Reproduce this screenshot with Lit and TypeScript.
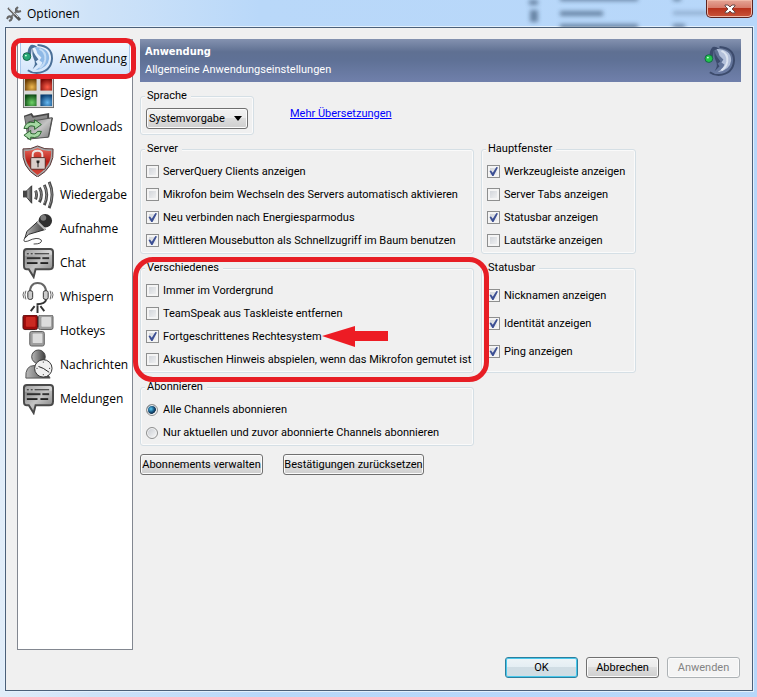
import { LitElement, html, css, svg, nothing } from "lit";
import { customElement, property } from "lit/decorators.js";

const speech = svg`
  <path d="M5 2h24q3 0 3 3v14q0 4-4 4H14l-2 8-5-8H5q-3 0-3-4V5q0-3 3-3z" fill="url(#g)" stroke="#4a4a4a" stroke-width="2"/>
  <path d="M3 9V6q0-3 3-3h22q3 0 3 3v2z" fill="#fff" opacity=".3"/>
  <path d="M5 7h2M9 7h2M13 7h15M5 12h14M21 12h7M5 17h11M19 17h8" stroke="#1c1c1c" stroke-width="1"/>
  <path d="M5 11h14M21 11h7M5 16h11M19 16h8" stroke="#333" stroke-width="1"/>`;

const moon = (line: string, face: string, shine: string, mic: string) => svg`
  <path d="M16 2Q31 3 31 16Q30 30 15 31Q10 31 6 28" fill="none" stroke="${line}" stroke-width="2"/>
  <path d="M9 2Q5 6 6 12L9 14L10 6Q12 4 16 4Q12 1 9 2z" fill="${line}"/>
  <path d="M13 4Q28 4 28 16Q27 26 14 28Q20 24 21 20L18 18L20 15L16 11Q15 7 13 4z" fill="${face}"/>
  <path d="M18 6Q25 9 24 17Q23 23 18 26" fill="none" stroke="${shine}" stroke-width="2"/>
  <path d="M11 5Q11 9 14 13L17 17L14 19L16 22L11 27Q15 21 12 16Q10 12 11 5z" fill="${line}"/>
  <circle cx="5" cy="14" r="4" fill="${mic}" stroke="#17624a"/>
  <circle cx="4" cy="13" r="1" fill="#c9ffd9"/>`;

const icons: Record<string, unknown> = {
  app: moon("#4b7098", "#8fb9e6", "#c4dcf5", "#27a876"),
  banner: moon("#3c4b6c", "#b3c0da", "#dbe3f0", "#21c64a"),
  design: svg`
    <rect x="1" y="0" width="32" height="32" fill="#6c6c6c"/>
    <rect x="2" y="1" width="30" height="30" fill="#d8d8d8"/>
    <rect x="3" y="2" width="12" height="12" fill="url(#q1)"/><rect x="19" y="2" width="12" height="12" fill="url(#q2)"/>
    <rect x="3" y="18" width="12" height="12" fill="url(#q3)"/><rect x="19" y="18" width="12" height="12" fill="url(#q4)"/>`,
  downloads: svg`
    <path d="M2 5l8-3 2 3 16-3v5l4 0-4 20-22 2z" fill="#484848"/>
    <path d="M3 6l6-2 2 3 15-3v22L6 27z" fill="#8a8a8a"/>
    <path d="M7 11l24-4-4 20-21 2z" fill="url(#g)" stroke="#555"/>
    <path d="M2 18Q4 10 13 12L13 9L20 14L13 19V16Q7 14 6 18z" fill="#a5d8a3" stroke="#28632c"/>
    <path d="M20 21Q18 29 9 27V30L2 25L9 20V23Q14 25 16 21z" fill="#a5d8a3" stroke="#28632c"/>`,
  security: svg`
    <path d="M16 1Q23 5 32 4Q34 23 16 33Q-1 23 1 4Q9 5 16 1z" fill="#a8a8a8" stroke="#553030"/>
    <path d="M16 3Q23 7 30 6Q31 21 16 31Q2 21 3 6Q9 7 16 3z" fill="url(#r)"/>
    <path d="M11 15V10Q11 6 16 6Q21 6 21 10V15" fill="none" stroke="#ece2e0" stroke-width="2"/>
    <rect x="9" y="13" width="15" height="12" rx="1" fill="#d9cecb" stroke="#5a2a26"/>
    <path d="M15 16h3v2l-1 1v4h-1v-4l-1-1z" fill="#222"/>`,
  playback: svg`
    <path d="M1 12h4v7H1z" fill="#444"/><path d="M5 12l5-5v18l-5-6z" fill="url(#k)" stroke="#333"/>
    <path d="M14 12q2 4 0 9M18 9q4 7 0 15M23 6q5 10 0 21M28 3q6 13 0 27" fill="none" stroke="#484848" stroke-width="3"/>
    <path d="M14 12q2 4 0 8M18 10q4 6 0 12M23 7q5 9 0 18M28 4q6 12 0 24" fill="none" stroke="#8a8a8a" stroke-width="1"/>`,
  capture: svg`
    <path d="M16 9l8 8L7 22l-4 4 2-7z" fill="url(#k)" stroke="#2a2a2a"/>
    <circle cx="24" cy="8" r="7" fill="#303030"/><circle cx="22" cy="5" r="3" fill="#7a7a7a"/>
    <path d="M16 9l8 8" stroke="#bbb" stroke-width="2"/>
    <path d="M4 24Q-1 31 6 29Q16 24 20 28Q21 32 12 32" fill="none" stroke="#444"/>`,
  chat: speech,
  whisper: svg`
    <path d="M8 13Q8 2 16 2Q25 2 25 13" fill="none" stroke="#666" stroke-width="2"/>
    <rect x="6" y="10" width="5" height="9" rx="2" fill="#ccc" stroke="#333"/><rect x="22" y="10" width="5" height="9" rx="2" fill="#ccc" stroke="#333"/>
    <path d="M25 19Q24 24 15 24" fill="none" stroke="#333" stroke-width="2"/>
    <path d="M4 10q-2 4 0 9M2 11q-2 3 0 7M29 10q2 4 0 9M31 11q2 3 0 7" fill="none" stroke="#666"/>
    <path d="M16 25v8M13 26l-4 5M19 26l4 5" stroke="#333" stroke-width="2"/>`,
  hotkeys: svg`
    <rect x="1" y="0" width="15" height="15" rx="2" fill="#9e0c0c" stroke="#4c1515"/><rect x="4" y="2" width="10" height="10" rx="1" fill="#cb2a22"/>
    <rect x="17" y="0" width="15" height="15" rx="2" fill="#9f9f9f" stroke="#5f5f5f"/><rect x="20" y="2" width="10" height="10" rx="1" fill="#dcdcdc"/>
    <rect x="8" y="17" width="15" height="15" rx="2" fill="#9f9f9f" stroke="#5f5f5f"/><rect x="11" y="19" width="10" height="10" rx="1" fill="#dcdcdc"/>`,
  messages: svg`
    <path d="M4 30Q3 17 13 17Q22 17 29 30z" fill="url(#k)" stroke="#555"/>
    <circle cx="17" cy="8" r="7" fill="url(#k)" stroke="#444"/>
    <circle cx="22" cy="20" r="9" fill="#f0f0f0" stroke="#333"/>
    <path d="M22 20l6 4M22 20l-5-2M22 13v1M22 26v1M15 20h1M28 20h1" stroke="#222" stroke-width="1"/>`,
  notify: speech,
};

@customElement("ts-icon")
export class TsIcon extends LitElement {
  @property() name = "";
  static styles = css`
    :host { display: block; flex: none; width: 32px; height: 32px; }
    .art { display: block; width: 100%; height: 100%; }
  `;
  render() {
    const tile = (id: string, light: string, dark: string) => svg`
      <radialGradient id=${id} cx=".6" cy=".7" r=".7"><stop stop-color=${light}/><stop offset="1" stop-color=${dark}/></radialGradient>`;
    return html`<svg class="art" viewBox="0 0 33 33" aria-hidden="true">
      <defs>
        <linearGradient id="g" x2="1" y2="1"><stop stop-color="#777"/><stop offset=".5" stop-color="#c4c4c4"/><stop offset="1" stop-color="#777"/></linearGradient>
        <linearGradient id="k"><stop stop-color="#bbb"/><stop offset="1" stop-color="#3c3c3c"/></linearGradient>
        <linearGradient id="r" x2="0" y2="1"><stop stop-color="#e8695c"/><stop offset=".5" stop-color="#b81e16"/><stop offset="1" stop-color="#d5493c"/></linearGradient>
        ${tile("q1", "#f0b94e", "#6b3f06")}${tile("q2", "#ff5e4a", "#7e0c08")}${tile("q3", "#6fd468", "#0d4a14")}${tile("q4", "#66b9f2", "#0b3d70")}
      </defs>${icons[this.name]}</svg>`;
  }
}

interface Option { text: string; on?: boolean; marked?: boolean }

const pages = [
  ["app", "Anwendung"], ["design", "Design"], ["downloads", "Downloads"],
  ["security", "Sicherheit"], ["playback", "Wiedergabe"], ["capture", "Aufnahme"],
  ["chat", "Chat"], ["whisper", "Whispern"], ["hotkeys", "Hotkeys"],
  ["messages", "Nachrichten"], ["notify", "Meldungen"],
];

const server: Option[] = [
  { text: "ServerQuery Clients anzeigen" },
  { text: "Mikrofon beim Wechseln des Servers automatisch aktivieren" },
  { text: "Neu verbinden nach Energiesparmodus", on: true },
  { text: "Mittleren Mousebutton als Schnellzugriff im Baum benutzen", on: true },
];
const mainWindow: Option[] = [
  { text: "Werkzeugleiste anzeigen", on: true },
  { text: "Server Tabs anzeigen" },
  { text: "Statusbar anzeigen", on: true },
  { text: "Lautstärke anzeigen" },
];
const misc: Option[] = [
  { text: "Immer im Vordergrund" },
  { text: "TeamSpeak aus Taskleiste entfernen" },
  { text: "Fortgeschrittenes Rechtesystem", on: true, marked: true },
  { text: "Akustischen Hinweis abspielen, wenn das Mikrofon gemutet ist" },
];
const statusbar: Option[] = [
  { text: "Nicknamen anzeigen", on: true },
  { text: "Identität anzeigen", on: true },
  { text: "Ping anzeigen", on: true },
];
const subscribe: Option[] = [
  { text: "Alle Channels abonnieren", on: true },
  { text: "Nur aktuellen und zuvor abonnierte Channels abonnieren" },
];

@customElement("app-root")
export class AppRoot extends LitElement {
  static styles = css`
    :host { display: block; color: #000; font: 11px/14px Roboto, "Liberation Sans", sans-serif; }
    * { box-sizing: border-box; }
    .window {
      position: relative; display: flex; flex-direction: column; min-height: 100vh; padding: 0 4px 6px 5px;
      background: linear-gradient(90deg, #e1edf9 0, #cfe3f8 90px, #b9d8f9 260px, #b7d7fa 100%);
    }
    .behind { position: absolute; top: 0; right: 0; width: 240px; height: 27px; }
    .titlebar { position: relative; display: flex; align-items: center; height: 27px; padding-left: 1px; gap: 5px; }
    .tool { width: 16px; height: 16px; }
    .title { flex: 1; margin: 0; font: 12px/16px "Open Sans", sans-serif; }
    .close {
      align-self: flex-start; width: 47px; height: 18px; padding: 0; border: 1px solid #5c2320; border-top: 0;
      border-radius: 0 0 5px 5px; box-shadow: inset 0 0 0 1px #f0b8a8;
      background: linear-gradient(#e5a596 0, #d77c6c 45%, #b8321d 50%, #c8543a 100%);
    }
    .cross { display: block; width: 12px; height: 10px; margin: 0 auto; }
    .client {
      flex: 1; display: flex; flex-direction: column; gap: 7px; padding: 11px 11px 12px 11px;
      background: #f0f0f0; border: 1px solid #4b6079; box-shadow: 0 0 0 1px #e4f1fd;
    }
    .body { flex: 1; display: flex; gap: 7px; }
    .pages {
      flex: none; width: 116px; padding: 2px; display: flex; flex-direction: column;
      background: #fff; border: 1px solid #828790;
    }
    .page {
      position: relative; display: flex; align-items: center; gap: 6px; height: 34px; padding: 0 2px; border: 0;
      background: none; color: #000; text-align: left; font: 12px/16px "Open Sans", sans-serif;
    }
    .page.current { background: linear-gradient(#f3f8fe, #cfe3fb); box-shadow: inset 0 0 0 1px #a9c8ec; }
    .ring { position: absolute; pointer-events: none; border: 5px solid #e71e25; z-index: 1; }
    .ring.small { inset: -4px -6px -3px -9px; border-radius: 10px; }
    .ring.large { inset: -4px -15px -9px -7px; border-radius: 20px; }
    .pane { flex: 1; min-width: 0; display: flex; flex-direction: column; gap: 7px; }
    .banner {
      display: flex; align-items: center; justify-content: space-between; height: 43px; padding: 1px 5px 0; color: #fff;
      background: linear-gradient(#8492b0 0, #5f7092 30%, #5f7196 50%, #7080ab 100%);
    }
    .heading { margin: 0; font: bold 11px/18px "DejaVu Sans Condensed", sans-serif; }
    .sub { margin: 0; line-height: 18px; }
    .language { display: flex; align-items: flex-start; gap: 36px; }
    .link { margin-top: 18px; color: #00f; }
    .groups { display: grid; grid-template-columns: 334px 155px; gap: 7px; }
    .holder { position: relative; display: grid; }
    fieldset {
      display: grid; align-content: start; min-width: 0; margin: 0; padding: 4px 5px 1px; border: 1px solid #d5dfe5; border-radius: 3px;
      box-shadow: inset 0 0 0 1px #fafafa;
    }
    legend { margin-left: -1px; padding: 0 4px 0 2px; background: #f0f0f0; }
    .lang { width: 114px; height: 46px; padding-top: 5px; }
    .spread { row-gap: 5px; padding-top: 9px; }
    .row { display: flex; align-items: center; gap: 4px; height: 23px; white-space: nowrap; }
    .radio { gap: 5px; }
    .check {
      appearance: none; flex: none; display: grid; place-items: center; width: 13px; height: 13px; margin: 0;
      border: 1px solid #8e8f8f; background: linear-gradient(135deg, #cbcfd5, #f6f6f6); box-shadow: inset 0 0 0 2px #f4f4f4;
    }
    .check:checked::before {
      content: ""; width: 9px; height: 9px; background: #3c4f94;
      clip-path: polygon(5% 45%, 22% 38%, 42% 65%, 82% 0, 100% 5%, 50% 100%, 36% 100%);
    }
    .dot {
      appearance: none; flex: none; width: 12px; height: 12px; margin: 0; border: 1px solid #8e8f8f; border-radius: 50%;
      background: linear-gradient(135deg, #c5c9cf, #fafafa); box-shadow: inset 0 0 0 1px #f4f4f4;
    }
    .dot:checked { background: radial-gradient(circle at 40% 40%, #5ccdf5 0, #1a5a86 35%, #0c2c4a 55%, #eee 62%); }
    .arrow { width: 66px; height: 21px; margin-left: -4px; }
    .select { position: relative; display: block; width: 102px; }
    .combo, .button {
      height: 21px; border: 1px solid #707070; border-radius: 3px; color: #000; font: inherit;
      background: linear-gradient(#f2f2f2 0, #ebebeb 48%, #dddddd 50%, #cfcfcf 100%); box-shadow: inset 0 0 0 1px #fbfbfb;
    }
    .combo { appearance: none; display: block; width: 100%; padding: 0 16px 0 2px; }
    .caret { position: absolute; right: 6px; top: 8px; width: 8px; height: 5px; background: #000; clip-path: polygon(0 0, 100% 0, 50% 100%); pointer-events: none; }
    .button { padding: 0; white-space: nowrap; }
    .actions { display: flex; gap: 20px; margin-top: 1px; }
    .manage { min-width: 123px; }
    .reset { min-width: 141px; }
    .footer { display: flex; justify-content: flex-end; gap: 8px; padding-right: 1px; }
    .footer .button { width: 73px; }
    .footer .ok { border-color: #2c7f9e; box-shadow: inset 0 0 0 1px #48c8ec; background: linear-gradient(#eef4f7 0, #e4eef3 48%, #d0dde4 50%, #cfdde4 100%); }
    .footer .button:disabled { color: #838383; border-color: #adb2b5; background: #f4f4f4; }
  `;

  private checks(list: Option[]) {
    return list.map((o) => html`<label class="row">
      <input class="check" type="checkbox" .checked=${!!o.on}><span>${o.text}</span>
      ${o.marked ? html`<svg class="arrow" viewBox="0 0 66 21" aria-hidden="true"><path d="M0 10L33 0V5H66V15H33V21z" fill="#ed1c24"/></svg>` : nothing}
    </label>`);
  }

  render() {
    return html`<div class="window">
      <svg class="behind" viewBox="0 0 240 27" aria-hidden="true">
        <filter id="soft" x="-20%" y="-40%" width="140%" height="180%"><feGaussianBlur stdDeviation="2"/></filter>
        <g filter="url(#soft)" fill="#35506e" opacity=".6">
          <rect x="12" y="0" width="9" height="5"/><rect x="13" y="10" width="8" height="12"/>
          <rect x="43" y="-4" width="78" height="5"/><rect x="43" y="11" width="43" height="5"/><rect x="43" y="24" width="78" height="5"/>
          <rect x="156" y="11" width="34" height="4" opacity=".5"/><rect x="156" y="24" width="12" height="4"/><rect x="156" y="-4" width="8" height="5"/>
        </g>
      </svg>
      <header class="titlebar">
        <svg class="tool" viewBox="0 0 16 16" aria-hidden="true">
          <path d="M2 2l11 11" stroke="#666" stroke-width="2"/><path d="M9 9l5 5" stroke="#555" stroke-width="3"/>
          <path d="M12 4L4 12" stroke="#777" stroke-width="2"/>
          <path d="M12 1l-2 2 0 2 2 1 3-1M4 10l-2 1-1 2M4 10l2 2-1 2-2 1" fill="none" stroke="#666" stroke-width="2"/>
          <path d="M3 2l9 9" stroke="#ccc" stroke-width="1"/>
        </svg>
        <h1 class="title">Optionen</h1>
        <button class="close" aria-label="Schließen"><svg class="cross" viewBox="0 0 12 10"><path d="M1 1h3l2 2 2-2h3v1L8 5l3 3v1H8L6 7 4 9H1V8l3-3-3-3z" fill="#fff" stroke="#6b4a48"/></svg></button>
      </header>
      <main class="client">
        <div class="body">
          <nav class="pages">
            ${pages.map(([icon, label], i) => html`<button class="page ${i ? "" : "current"}">
              <ts-icon name=${icon}></ts-icon>${label}${i ? nothing : html`<span class="ring small"></span>`}
            </button>`)}
          </nav>
          <section class="pane">
            <div class="banner">
              <div><h2 class="heading">Anwendung</h2><p class="sub">Allgemeine Anwendungseinstellungen</p></div>
              <ts-icon name="banner"></ts-icon>
            </div>
            <div class="language">
              <fieldset class="lang"><legend>Sprache</legend>
                <div class="select"><select class="combo" aria-label="Sprache"><option>Systemvorgabe</option></select><span class="caret"></span></div>
              </fieldset>
              <a class="link" href="#">Mehr Übersetzungen</a>
            </div>
            <div class="groups">
              <fieldset><legend>Server</legend>${this.checks(server)}</fieldset>
              <fieldset><legend>Hauptfenster</legend>${this.checks(mainWindow)}</fieldset>
              <div class="holder">
                <fieldset><legend>Verschiedenes</legend>${this.checks(misc)}</fieldset>
                <span class="ring large"></span>
              </div>
              <fieldset class="spread"><legend>Statusbar</legend>${this.checks(statusbar)}</fieldset>
              <fieldset><legend>Abonnieren</legend>${subscribe.map((o) => html`<label class="row radio">
                <input class="dot" type="radio" name="subscribe" .checked=${!!o.on}><span>${o.text}</span></label>`)}</fieldset>
            </div>
            <div class="actions">
              <button class="button manage">Abonnements verwalten</button>
              <button class="button reset">Bestätigungen zurücksetzen</button>
            </div>
          </section>
        </div>
        <footer class="footer">
          <button class="button ok">OK</button><button class="button">Abbrechen</button><button class="button" disabled>Anwenden</button>
        </footer>
      </main>
    </div>`;
  }
}
